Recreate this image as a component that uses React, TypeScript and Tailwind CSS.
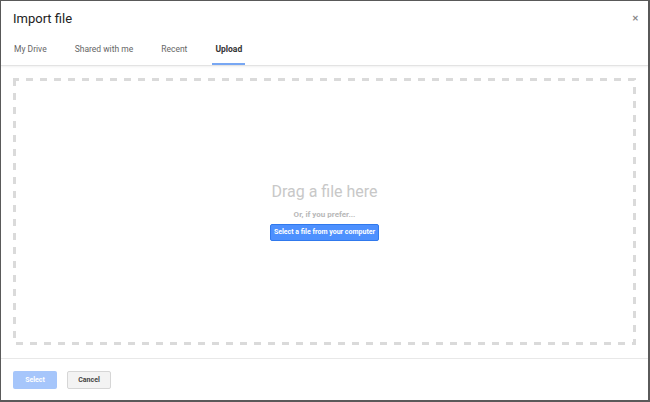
import React from 'react';

const tabs = ['My Drive', 'Shared with me', 'Recent', 'Upload'];

const DropZone = () => {
    return (
        <div className="relative h-[267px] w-full flex flex-col items-center justify-center">
            <svg className="absolute inset-0 h-full w-full" width="623" height="267">
                <rect x="1.5" y="1.5" width="620" height="264" fill="none" stroke="#dadada" strokeWidth="3" strokeDasharray="7 7" strokeDashoffset="2.5" />
            </svg>
            <div className="relative text-[16px] leading-[20px] text-[#c8c8c8]">Drag a file here</div>
            <div className="relative mt-[8px] text-[8px] leading-[10px] font-bold text-[#b8b8b8]">Or, if you prefer...</div>
            <button className="relative mt-[4px] h-[17px] w-[109px] rounded-[2px] border border-[#3079ed] bg-[#4d90fe] text-[7px] font-bold text-white">
                Select a file from your computer
            </button>
        </div>
    );
};

export default function App() {
    return (
        <div className="h-[402px] w-[650px] flex flex-col bg-white border-t border-l border-r-2 border-b-2 border-[#5a5a5a] font-['Roboto',sans-serif]">
            <div className="border-b border-[#e3e3e3] shadow-[0_1px_2px_rgba(0,0,0,0.06)]">
                <div className="h-[35px] flex items-center justify-between pl-[12px] pr-[9px]">
                    <div className="text-[13px] text-[#222]">Import file</div>
                    <div className="text-[8px] leading-none font-bold text-[#888]">✕</div>
                </div>
                <div className="h-[29px] flex gap-[22px] pl-[10px]">
                    {tabs.map((t) => (
                        <div
                            key={t}
                            className={
                                t === 'Upload'
                                    ? 'h-full flex items-center px-[3px] border-b-2 border-[#78a7f3] text-[8.5px] font-bold text-[#333]'
                                    : 'h-full flex items-center px-[3px] border-b-2 border-transparent text-[8.5px] text-[#666]'
                            }
                        >
                            {t}
                        </div>
                    ))}
                </div>
            </div>
            <div className="flex-1 px-[12px] pt-[12px]">
                <DropZone />
            </div>
            <div className="h-[42px] border-t border-[#e8e8e8] flex gap-[10px] pl-[12px] pt-[12px]">
                <button className="h-[18px] w-[44px] rounded-[2px] bg-[#a6c6fb] text-[7px] font-bold text-white">Select</button>
                <button className="h-[18px] w-[44px] rounded-[2px] border border-[#d6d6d6] bg-[#f3f3f3] text-[7px] font-bold text-[#444]">Cancel</button>
            </div>
        </div>
    );
}
